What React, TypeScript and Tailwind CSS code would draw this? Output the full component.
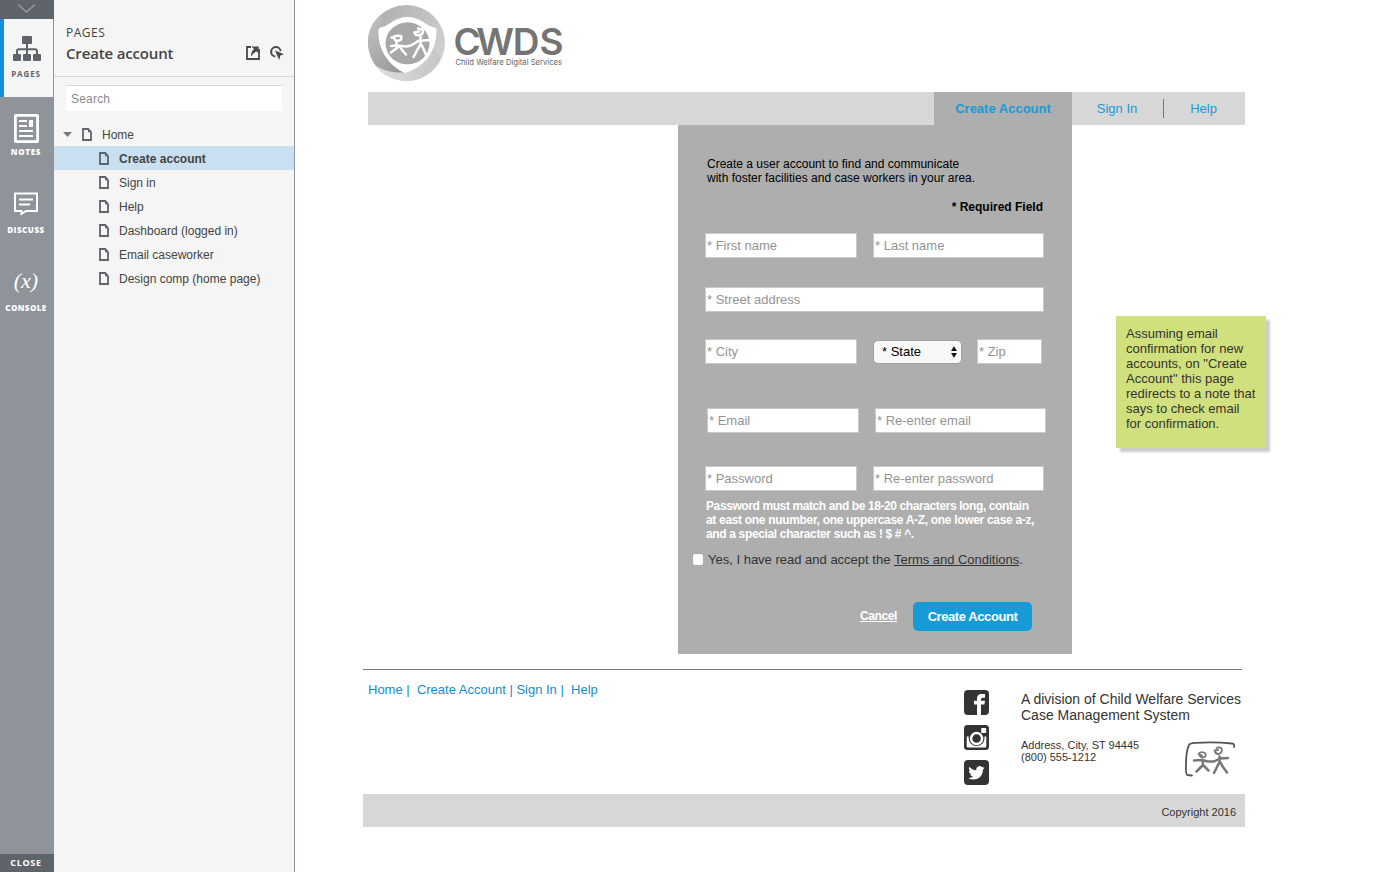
import React from "react";

const arial = "font-['Liberation_Sans',Arial,sans-serif]";

function PageIcon() {
  return (
    <svg width="10" height="13" viewBox="0 0 10 13" className="shrink-0">
      <path d="M1 1H6.2L9 4V12H1Z" fill="none" stroke="#5f646b" strokeWidth="1.8" />
      <path d="M6 0.5V4.2H9.5Z" fill="#5f646b" />
    </svg>
  );
}

function RailItem({ label, tracking, children }: { label: string; tracking: string; children: React.ReactNode }) {
  return (
    <div className="flex h-[78px] w-full flex-col items-center pr-[2px] text-white">
      <div className="flex h-[49px] w-full items-center justify-center pt-[7px]">{children}</div>
      <div className={`font-['Open_Sans','Noto_Sans',sans-serif] text-[8px] leading-[12px] font-extrabold whitespace-nowrap ${tracking}`}>{label}</div>
    </div>
  );
}

function Rail() {
  return (
    <div className="flex h-full w-[54px] shrink-0 flex-col bg-[#8f949b]">
      <div className="flex h-[19px] shrink-0 justify-center bg-[#5f646a]">
        <svg width="20" height="19" viewBox="0 0 20 19">
          <path d="M1 4.500L9.500 12L18 4.500" fill="none" stroke="#969ba1" strokeWidth="1.6" />
        </svg>
      </div>
      <div className="flex h-[78px] w-[53px] shrink-0 flex-col items-center border-l-4 border-[#168ddd] bg-[#f5f5f5] pr-[5px]">
        <svg width="28" height="25" viewBox="0 0 28 25" className="mt-[17px] ml-[2px] shrink-0">
          <g fill="#5f646a">
            <rect x="9" y="0" width="10" height="8" rx="1" />
            <rect x="0" y="18" width="8" height="7" rx="1" />
            <rect x="10" y="18" width="8" height="7" rx="1" />
            <rect x="20" y="18" width="8" height="7" rx="1" />
          </g>
          <path d="M14 8V18M4 18V15.5Q4 13.3 6 13.3H22Q24 13.3 24 15.5V18" fill="none" stroke="#5f646a" strokeWidth="2" />
        </svg>
        <div className="mt-[7px] font-['Open_Sans',sans-serif] text-[8px] leading-[12px] font-bold tracking-[0.85px] text-[#5f646a]">PAGES</div>
      </div>
      <RailItem label="NOTES" tracking="tracking-[0.7px]">
        <svg width="25" height="29" viewBox="0 0 25 29" className="mt-[7px] ml-px">
          <rect x="1.4" y="1.4" width="22.2" height="26.2" rx="0.6" fill="none" stroke="#fff" strokeWidth="2.8" />
          <path d="M5 7H13M5 12H13M5 17H19M5 22H19" stroke="#fff" strokeWidth="2" />
          <rect x="15" y="6" width="4" height="7" fill="#fff" />
        </svg>
      </RailItem>
      <RailItem label="DISCUSS" tracking="tracking-[0.55px]">
        <svg width="24" height="24" viewBox="0 0 24 24" className="mt-px">
          <path d="M1 1.5H23V19H12L7.5 22V19H1Z" fill="none" stroke="#fff" strokeWidth="2" />
          <path d="M5 7.5H19M5 12.5H16" stroke="#fff" strokeWidth="2" />
        </svg>
      </RailItem>
      <RailItem label="CONSOLE" tracking="tracking-[0.45px]">
        <div className="pb-[1px] font-['Liberation_Serif',serif] text-[22px] leading-[24px] italic">(x)</div>
      </RailItem>
      <div className="flex-1" />
      <div className="flex h-[18px] shrink-0 items-center justify-center bg-[#5f646a] pr-[2px] font-['Open_Sans',sans-serif] text-[9px] font-bold tracking-[0.7px] text-white">CLOSE</div>
    </div>
  );
}

const pages: [string, string][] = [
  ["Create account", "font-bold tracking-[0.01px]"],
  ["Sign in", ""],
  ["Help", ""],
  ["Dashboard (logged in)", ""],
  ["Email caseworker", ""],
  ["Design comp (home page)", ""],
];

function Sidebar() {
  return (
    <div className="flex h-full w-[241px] shrink-0 flex-col border-r border-[#8f949b] bg-[#f5f5f5] text-[#444]">
      <div className="flex h-[77px] shrink-0 flex-col border-b border-[#d3d5d6] pt-[24px] pr-[10px] pl-[12px] font-['Open_Sans',sans-serif]">
        <div className="text-[12px] leading-[17px] font-medium tracking-[0.5px]">PAGES</div>
        <div className="flex h-[25px] items-center justify-between">
          <div className="pb-[2px] text-[15px] leading-[20px] font-semibold tracking-[-0.16px] whitespace-nowrap">Create account</div>
          <div className="flex items-center gap-[10px] pb-[2px]">
            <svg width="14" height="14" viewBox="0 0 14 14">
              <path d="M5 1H1V13H13V8M13 3V9" fill="none" stroke="#4a4a4a" strokeWidth="1.8" />
              <path d="M5.5 0.5H12.7V7.5L10.7 5.5Q6.5 7 5.3 10.5Q4 6 8 3Z" fill="#4a4a4a" />
            </svg>
            <svg width="14" height="14" viewBox="0 0 14 14">
              <path d="M5.3 10.6A4.8 4.8 0 1 1 10.7 5.2" fill="none" stroke="#4a4a4a" strokeWidth="2" />
              <path d="M5 4.4L14 8.2L10.4 9.6L9.2 14Z" fill="#4a4a4a" />
            </svg>
          </div>
        </div>
      </div>
      <div className={`mx-[12px] mt-[8px] h-[26px] w-[216px] shrink-0 border-t border-[#d8d8d8] bg-white pl-[5px] text-[12px] leading-[26px] tracking-[0.2px] text-[#8a8a8a] ${arial}`}>Search</div>
      <div className={`mt-[12px] text-[12px] ${arial}`}>
        <div className="flex h-[23px] items-center pl-[9px]">
          <svg width="9" height="5" viewBox="0 0 9 5"><path d="M0 0H9L4.5 5Z" fill="#7a7a7a" /></svg>
          <div className="ml-[10px] flex"><PageIcon /></div>
          <span className="ml-[10px]">Home</span>
        </div>
        {pages.map(([name, cls], i) => (
          <div key={name} className={`flex h-[24px] items-center pt-[1px] pl-[45px] ${i === 0 ? "bg-[#c9e0f0]" : ""}`}>
            <PageIcon />
            <span className={`ml-[10px] pt-[1px] whitespace-nowrap ${cls}`}>{name}</span>
          </div>
        ))}
      </div>
    </div>
  );
}

function Logo() {
  return (
    <svg width="212" height="78" viewBox="368 4 212 78" className="ml-[5px] block">
      <defs>
        <linearGradient id="ring" x1="0" y1="0" x2="1" y2="0.7">
          <stop offset="0" stopColor="#aaaaaa" />
          <stop offset="1" stopColor="#d2d2d2" />
        </linearGradient>
        <linearGradient id="sweep" x1="0" y1="0" x2="1" y2="1">
          <stop offset="0" stopColor="#c4c4c4" />
          <stop offset="1" stopColor="#929292" />
        </linearGradient>
        <linearGradient id="base" x1="0" y1="0" x2="1" y2="0">
          <stop offset="0" stopColor="#dedede" />
          <stop offset="1" stopColor="#c6c6c6" />
        </linearGradient>
      </defs>
      <ellipse cx="406.5" cy="43" rx="38.5" ry="38" fill="url(#ring)" />
      <path d="M375 65Q388 74 405 72.500Q426 68 434 48L441 58Q429 81 406.500 81Q386 80.500 375 65Z" fill="url(#base)" />
      <path d="M384 12.500Q367 24 368 44Q369 57 376 66Q389 73.500 405 72.500L390 60L379 31Z" fill="url(#sweep)" />
      <path d="M378.3 30Q378.300 28 380.500 27.500Q386 26.500 391 22.500Q399 17 407.500 17Q416 17 424 22.500Q429 26.500 434.500 27.500Q436.700 28 436.700 30Q436.500 47 427 59Q417 70 404.700 73Q393 68 385 56Q378 45 378.300 30Z" fill="#fff" />
      <ellipse cx="407.5" cy="43.300" rx="22" ry="21" fill="#a8a8a8" />
      <g fill="none" stroke="#fff" strokeWidth="2.500" strokeLinecap="round" strokeLinejoin="round">
        <path d="M391.500 37.500L394 38M394 36.500Q396 35.500 401 36Q402.500 40 398.500 40.800Q395 41 394.500 39M396.500 41.500V44" />
        <path d="M391 46L397 45.500L406 46.500Q412 46 418 41L424 40.500L430 40" />
        <path d="M399 46.500L391 52.500M400 46.500L402 50L406 54.500" />
        <path d="M414.500 32.500Q415 36 420 35Q424.500 33 422.500 29.500L418 28.500M414.500 32.500L419 31.500M420.500 37V44L413.500 57M421.500 45L424 50L427 57" />
      </g>
      <text x="453.5 476.3 512.7 539.5" y="55.2" fontFamily="Inter, sans-serif" fontWeight="600" fontSize="37" fill="#747474">CWDS</text>
      <text x="455.5" y="65" textLength="106.5" lengthAdjust="spacingAndGlyphs" fontFamily="Inter, sans-serif" fontSize="8" fill="#666">Child Welfare Digital Services</text>
    </svg>
  );
}

function Field({ label, className }: { label: string; className: string }) {
  return (
    <div className={`h-[25px] border border-[#c9c9c9] bg-white pl-[1px] text-[13px] leading-[23px] whitespace-nowrap text-[#949494] ${className}`}>{label}</div>
  );
}

function Form() {
  return (
    <div className="flex h-[529px] w-[394px] shrink-0 flex-col bg-[#aeaeae] pt-[32px] pl-[27px] text-black">
      <div className="pl-[2px] text-[12px] leading-[14px] whitespace-nowrap">
        <p>Create a user account to find and communicate</p>
        <p>with foster facilities and case workers in your area.</p>
      </div>
      <div className="mt-[15px] w-[338px] text-right text-[12px] leading-[14px] font-bold">* Required Field</div>
      <div className="mt-[19px] flex gap-[16px]">
        <Field label="* First name" className="w-[152px]" />
        <Field label="* Last name" className="w-[171px]" />
      </div>
      <Field label="* Street address" className="mt-[29px] w-[339px]" />
      <div className="mt-[27px] flex">
        <Field label="* City" className="w-[152px]" />
        <div className="mt-[1px] ml-[16px] flex h-[24px] w-[89px] items-center justify-between rounded-[5px] border border-[#a0a0a0] bg-[#f8f8f8] pr-[4px] pl-[8px] text-[13px] leading-[20px]">
          <span>* State</span>
          <svg width="6" height="12" viewBox="0 0 6 12"><path d="M0 5L3 0.3L6 5ZM0 7L3 11.7L6 7Z" fill="#111" /></svg>
        </div>
        <Field label="* Zip" className="ml-[15px] w-[65px]" />
      </div>
      <div className="mt-[44px] flex gap-[16px] pl-[2px]">
        <Field label="* Email" className="w-[152px]" />
        <Field label="* Re-enter email" className="w-[171px]" />
      </div>
      <div className="mt-[33px] flex gap-[16px]">
        <Field label="* Password" className="w-[152px]" />
        <Field label="* Re-enter password" className="w-[171px]" />
      </div>
      <div className="mt-[8px] pl-[1px] text-[12px] leading-[14px] font-bold whitespace-nowrap text-white">
        <p className="tracking-[-0.4px]">Password must match and be 18-20 characters long, contain</p>
        <p className="tracking-[-0.32px]">at east one nuumber, one uppercase A-Z, one lower case a-z,</p>
        <p className="tracking-[-0.35px]">and a special character such as ! $ # ^.</p>
      </div>
      <div className="mt-[11px] -ml-[12px] flex h-[16px] items-start text-[13px] leading-[16px] text-[#333]">
        <span className="mt-[2px] h-[11px] w-[10px] rounded-[2px] bg-white shadow-[0_0_1px_#888]" />
        <span className="ml-[5px] whitespace-nowrap">Yes, I have read and accept the <span className="tracking-[-0.03px] underline">Terms and Conditions</span>.</span>
      </div>
      <div className="mt-[34px] flex h-[29px] w-[327px] items-center justify-end font-bold text-white">
        <span className="mr-[16px] pb-[2px] text-[12px] tracking-[-0.4px] underline">Cancel</span>
        <span className="flex h-[29px] w-[119px] items-center justify-center rounded-[5px] bg-[#169bd7] text-[13px] tracking-[-0.42px]">Create Account</span>
      </div>
    </div>
  );
}

function Facebook() {
  return (
    <svg width="25" height="25" viewBox="0 0 25 25">
      <rect width="25" height="25" rx="4" fill="#333" />
      <path d="M13 25V14.5H10V10.7H13V8.5Q13 4 17.5 4H21V7.8H18.8Q17 7.8 17 9.5V10.7H21L20.4 14.5H17V25Z" fill="#fff" />
    </svg>
  );
}

function Instagram() {
  return (
    <svg width="25" height="25" viewBox="0 0 25 25">
      <rect width="25" height="25" rx="3.5" fill="#333" />
      <path d="M2.700 11.500H22.300V21Q22.300 22.500 20.800 22.500H4.200Q2.700 22.500 2.700 21Z" fill="#fff" />
      <circle cx="12.6" cy="13" r="8" fill="#333" />
      <circle cx="12.6" cy="13.5" r="5.500" fill="none" stroke="#fff" strokeWidth="2.500" />
      <rect x="17.200" y="3" width="5" height="5" rx="0.8" fill="#fff" />
    </svg>
  );
}

function Twitter() {
  return (
    <svg width="25" height="25" viewBox="0 0 25 25">
      <rect width="25" height="25" rx="4" fill="#333" />
      <g transform="translate(4.300 4.600) scale(0.68)">
        <path fill="#fff" d="M23.953 4.570a10 10 0 01-2.825.775 4.958 4.958 0 002.163-2.723c-.951.555-2.005.959-3.127 1.184a4.920 4.920 0 00-8.384 4.482C7.690 8.095 4.067 6.130 1.640 3.162a4.822 4.822 0 00-.666 2.475c0 1.710.870 3.213 2.188 4.096a4.904 4.904 0 01-2.228-.616v.060a4.923 4.923 0 003.946 4.827 4.996 4.996 0 01-2.212.085 4.936 4.936 0 004.604 3.417 9.867 9.867 0 01-6.102 2.105c-.390 0-.779-.023-1.170-.067a13.995 13.995 0 007.557 2.209c9.053 0 13.998-7.496 13.998-13.985 0-.210 0-.420-.015-.630A9.935 9.935 0 0024 4.590z" />
      </g>
    </svg>
  );
}

function PeopleMark() {
  return (
    <svg width="52" height="36" viewBox="0 0 52 36">
      <path d="M8 34.500L3.500 34Q1.500 33 2 24Q2 10 5 4Q6 1.800 12 1.900Q30 0.800 48 2.500Q51 3 50 6" fill="none" stroke="#555" strokeWidth="1.800" strokeLinecap="round" />
      <g fill="none" stroke="#777" strokeLinecap="round" strokeLinejoin="round">
        <g strokeWidth="1.800">
          <path d="M14.500 13L18 14.500M15.500 12Q18 10 21.500 12.500Q22.500 16 19 16.500Q16.500 16.500 15.500 14.500" />
          <path d="M30.500 9.500Q31.500 13.500 35 13Q39 11 37.500 7.500Q35.500 5.500 32.500 7M31 9.500L34 9" />
        </g>
        <path strokeWidth="2.500" d="M10 19.500L18 19L24 20.500L30 20.500L36 17.500L44 17M18.500 19.500L19 24L12.500 30.500M19 24L24.500 29.500M35.500 15.500V21L30 32M36 21L39 26L43 31.500" />
      </g>
    </svg>
  );
}

function Footer() {
  return (
    <div className="mt-[15px] w-[882px]">
      <div className="h-px w-[879px] bg-[#777]" />
      <div className="flex h-[124px] text-[#333]">
        <div className="w-[601px] shrink-0 pt-[12px] pl-[5px] text-[13px] leading-[16px] whitespace-pre text-[#168ccc]">{"Home |  Create Account | Sign In |  Help"}</div>
        <div className="flex w-[25px] shrink-0 flex-col gap-[10px] pt-[20px]">
          <Facebook />
          <Instagram />
          <Twitter />
        </div>
        <div className="ml-[32px] flex-1 pt-[21px]">
          <div className="text-[14px] leading-[16px] whitespace-nowrap">
            <p>A division of Child Welfare Services</p>
            <p>Case Management System</p>
          </div>
          <div className="flex">
            <div className="w-[163px] pt-[16px] text-[11px] leading-[12px] whitespace-nowrap">
              <p>Address, City, ST 94445</p>
              <p>(800) 555-1212</p>
            </div>
            <div className="pt-[18px]"><PeopleMark /></div>
          </div>
        </div>
      </div>
      <div className="h-[33px] bg-[#d7d7d7] pt-[2px] pr-[9px] text-right text-[11px] leading-[33px] text-[#333]">Copyright 2016</div>
    </div>
  );
}

export default function App() {
  return (
    <div className="flex h-[872px] w-[1390px] overflow-hidden bg-white">
      <Rail />
      <Sidebar />
      <main className={`flex-1 pl-[68px] ${arial}`}>
        <div className="h-[92px] pt-[4px]"><Logo /></div>
        <nav className="ml-[5px] flex h-[33px] w-[877px] items-center justify-end bg-[#d7d7d7] text-[13px] text-[#169bd7]">
          <div className="flex h-[33px] w-[138px] items-center justify-center bg-[#aeaeae] font-bold">Create Account</div>
          <div className="w-[91px] pr-[1px] text-center">Sign In</div>
          <div className="h-[19px] w-px bg-[#777]" />
          <div className="w-[81px] pr-[2px] text-center">Help</div>
        </nav>
        <div className="flex pl-[315px]">
          <Form />
          <div className="mt-[191px] ml-[44px] h-[132px] w-[150px] bg-[#d0e07c] pt-[10px] pl-[10px] text-[13px] leading-[15px] whitespace-nowrap text-[#333] shadow-[4px_4px_2px_rgba(0,0,0,0.2)]">
            <p>Assuming email</p>
            <p>confirmation for new</p>
            <p>accounts, on "Create</p>
            <p>Account" this page</p>
            <p>redirects to a note that</p>
            <p>says to check email</p>
            <p>for confirmation.</p>
          </div>
        </div>
        <Footer />
      </main>
    </div>
  );
}
